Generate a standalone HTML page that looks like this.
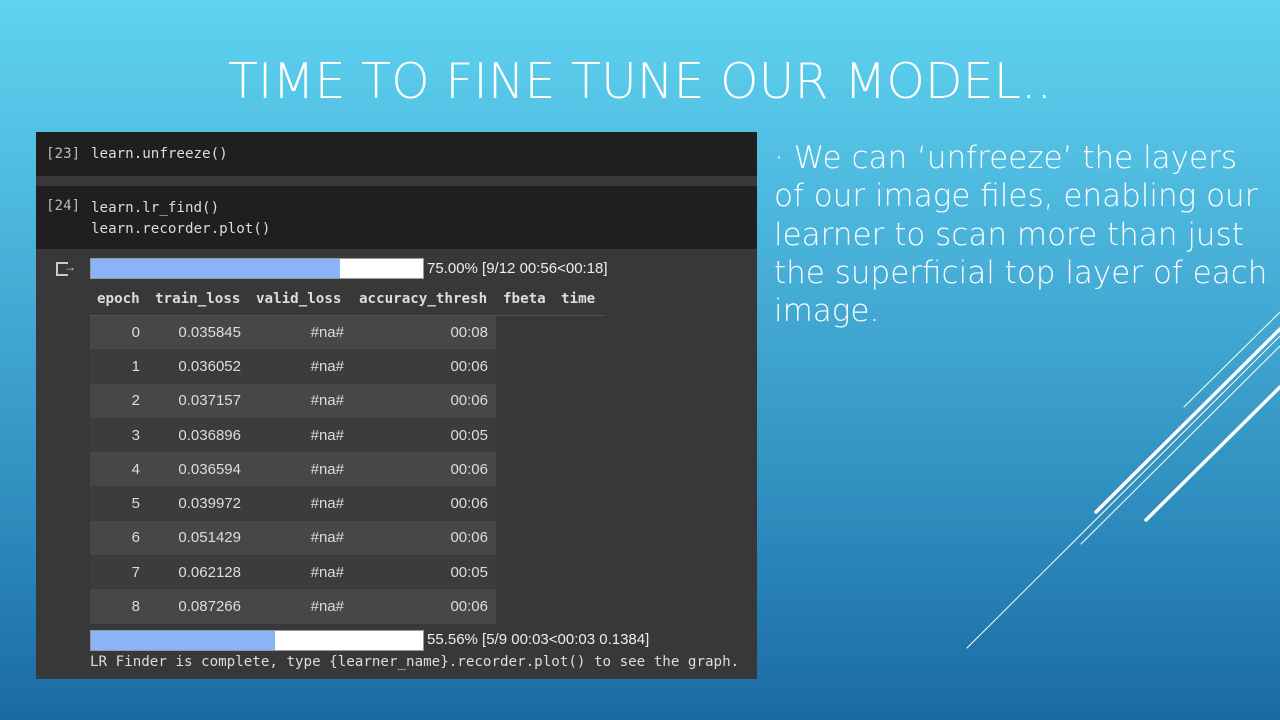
<!DOCTYPE html>
<html><head><meta charset="utf-8"><style>
*{margin:0;padding:0;box-sizing:border-box}
body{width:1280px;height:720px;overflow:hidden;position:relative;font-family:"Liberation Sans",sans-serif;background:linear-gradient(180deg,#5fd3f0 0%,#45acd6 40%,#2f8ebf 70%,#1a6aa2 100%)}
h1{position:absolute;left:0;width:1280px;top:53px;text-align:center;color:#fff;font-size:49px;font-family:"DejaVu Sans",sans-serif;font-weight:200;letter-spacing:0}
.panel{position:absolute;left:36px;top:132px;width:721px;height:547px;background:#383838}
.cell{position:absolute;left:0;width:721px;background:#1f1f1f;font-family:"DejaVu Sans Mono",monospace;font-size:14.2px;color:#ddd}
.mono{font-family:"DejaVu Sans Mono",monospace}
.bar{position:absolute;height:21px;background:#fff;border:1px solid #999}
.bar div{height:100%;background:#8ab4f8}
.txt{position:absolute;color:#eee;font-size:15px}
table{position:absolute;left:54px;top:151px;border-collapse:collapse;color:#ddd;font-size:15px;table-layout:fixed}
th{font-family:"DejaVu Sans Mono",monospace;font-weight:bold;font-size:14.2px;height:32px;padding:0 7px;text-align:left}
td{height:34.3px;text-align:right;padding-right:8px}
tr.r td.c{background:#474747}tr.d td.c{background:#3c3c3c}
.sid{position:absolute;left:774px;top:139px;color:#fff;font-size:31px;line-height:38.3px;font-family:"DejaVu Sans",sans-serif;font-weight:200;white-space:nowrap;letter-spacing:0}
</style></head><body>
<h1>TIME TO FINE TUNE OUR MODEL..</h1>
<div class="panel">
<div class="cell" style="top:0;height:44px"><span style="position:absolute;left:10px;top:14px;color:#bbb">[23]</span><span style="position:absolute;left:55px;top:14px">learn.unfreeze()</span></div>
<div class="cell" style="top:54px;height:63px"><span style="position:absolute;left:10px;top:12px;color:#bbb">[24]</span><span style="position:absolute;left:55px;top:12px;line-height:21px">learn.lr_find()<br>learn.recorder.plot()</span></div>
<div style="position:absolute;left:20px;top:130px;width:12px;height:14px;border:2px solid #ccc;border-right:none"></div><span style="position:absolute;left:28px;top:128px;color:#ccc;font-size:12px">→</span>
<div class="bar" style="left:54px;top:126px;width:334px"><div style="width:75%"></div></div>
<div class="txt" style="left:391px;top:128px">75.00% [9/12 00:56&lt;00:18]</div>
<table>
<colgroup><col style="width:58px"><col style="width:101px"><col style="width:103px"><col style="width:144px"><col style="width:58px"><col style="width:50px"></colgroup>
<tr style="border-bottom:1px solid #555"><th>epoch</th><th>train_loss</th><th>valid_loss</th><th>accuracy_thresh</th><th>fbeta</th><th>time</th></tr>
<tr class="r"><td class="c">0</td><td class="c">0.035845</td><td class="c">#na#</td><td class="c">00:08</td><td></td><td></td></tr>
<tr class="d"><td class="c">1</td><td class="c">0.036052</td><td class="c">#na#</td><td class="c">00:06</td><td></td><td></td></tr>
<tr class="r"><td class="c">2</td><td class="c">0.037157</td><td class="c">#na#</td><td class="c">00:06</td><td></td><td></td></tr>
<tr class="d"><td class="c">3</td><td class="c">0.036896</td><td class="c">#na#</td><td class="c">00:05</td><td></td><td></td></tr>
<tr class="r"><td class="c">4</td><td class="c">0.036594</td><td class="c">#na#</td><td class="c">00:06</td><td></td><td></td></tr>
<tr class="d"><td class="c">5</td><td class="c">0.039972</td><td class="c">#na#</td><td class="c">00:06</td><td></td><td></td></tr>
<tr class="r"><td class="c">6</td><td class="c">0.051429</td><td class="c">#na#</td><td class="c">00:06</td><td></td><td></td></tr>
<tr class="d"><td class="c">7</td><td class="c">0.062128</td><td class="c">#na#</td><td class="c">00:05</td><td></td><td></td></tr>
<tr class="r"><td class="c">8</td><td class="c">0.087266</td><td class="c">#na#</td><td class="c">00:06</td><td></td><td></td></tr>
</table>
<div class="bar" style="left:54px;top:498px;width:334px"><div style="width:55.56%"></div></div>
<div class="txt" style="left:391px;top:499px">55.56% [5/9 00:03&lt;00:03 0.1384]</div>
<div class="txt mono" style="left:54px;top:522px;font-size:14.2px;color:#ddd">LR Finder is complete, type {learner_name}.recorder.plot() to see the graph.</div>
</div>
<div class="sid">· We can ‘unfreeze’ the layers<br>of our image files, enabling our<br>learner to scan more than just<br>the superficial top layer of each<br>image.</div>
<svg width="1280" height="720" style="position:absolute;left:0;top:0" stroke="#fff" stroke-linecap="round">
<line x1="1184" y1="407" x2="1280" y2="312" stroke-width="1"/>
<line x1="1096" y1="512" x2="1280" y2="329" stroke-width="3.5"/>
<line x1="967" y1="648" x2="1280" y2="336" stroke-width="1"/>
<line x1="1081" y1="544" x2="1280" y2="346" stroke-width="1"/>
<line x1="1146" y1="520" x2="1280" y2="387" stroke-width="3.5"/>
</svg>
</body></html>
